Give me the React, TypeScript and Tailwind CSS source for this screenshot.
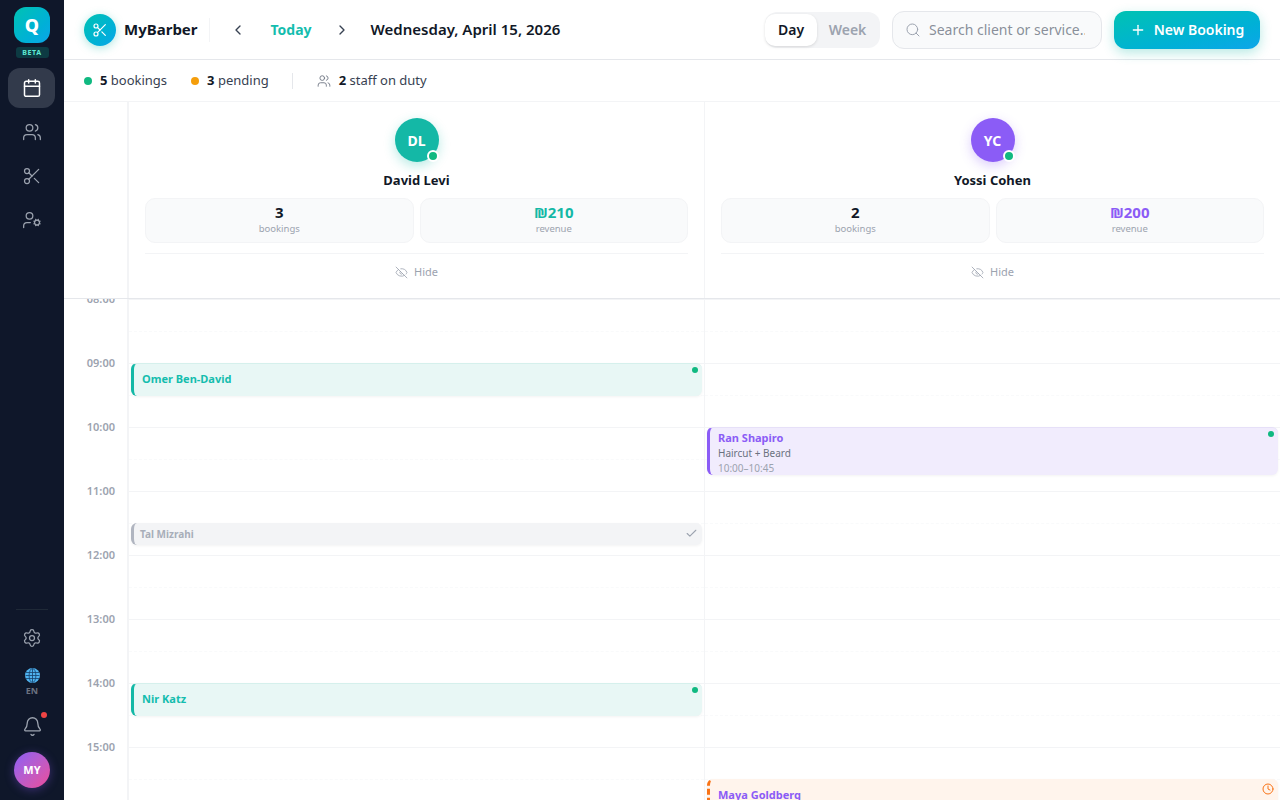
import React from "react";
import {
  Calendar,
  Check,
  ChevronLeft,
  ChevronRight,
  Clock,
  Bell,
  EyeOff,
  Plus,
  Scissors,
  Search,
  Settings,
  UserCog,
  Users,
} from "lucide-react";

const hours = ["08:00", "09:00", "10:00", "11:00", "12:00", "13:00", "14:00", "15:00"];

const staff = [
  {
    initials: "DL",
    name: "David Levi",
    bookings: "3",
    revenue: "₪210",
    avatar: "bg-[#14b8a6] shadow-[0_4px_12px_rgba(20,184,166,0.3)]",
    color: "text-[#14b8a6]",
  },
  {
    initials: "YC",
    name: "Yossi Cohen",
    bookings: "2",
    revenue: "₪200",
    avatar: "bg-[#8b5cf6] shadow-[0_4px_12px_rgba(139,92,246,0.3)]",
    color: "text-[#8b5cf6]",
  },
];

const StaffHeader = ({ person, last }: { person: (typeof staff)[number]; last?: boolean }) => (
  <div className={`flex-1 min-w-0 px-4 pt-4 flex flex-col items-center ${last ? "" : "border-r border-[#f3f4f6]"}`}>
    <div className="relative">
      <div className={`w-11 h-11 rounded-full flex items-center justify-center text-white text-sm font-bold pt-px ${person.avatar}`}>
        {person.initials}
      </div>
      <span className="absolute right-0 bottom-0 w-3 h-3 rounded-full bg-[#10b981] border-2 border-white" />
    </div>
    <div className="mt-[9px] text-[13px] leading-[18px] font-bold text-[#111827]">{person.name}</div>
    <div className="w-full flex gap-[6px] mt-[9px]">
      <div className="flex-1 h-[45px] rounded-[10px] bg-[#f9fafb] border border-[#f3f4f6] flex flex-col items-center pt-[3px]">
        <span className="text-[15px] leading-[20px] font-bold text-[#111827]">{person.bookings}</span>
        <span className="mt-px text-[9.5px] leading-[12px] text-[#9ca3af]">bookings</span>
      </div>
      <div className="flex-1 h-[45px] rounded-[10px] bg-[#f9fafb] border border-[#f3f4f6] flex flex-col items-center pt-[3px]">
        <span className={`text-[15px] leading-[20px] font-bold ${person.color}`}>{person.revenue}</span>
        <span className="mt-px text-[9.5px] leading-[12px] text-[#9ca3af]">revenue</span>
      </div>
    </div>
    <div className="w-full mt-[10px] border-t border-[#f3f4f6] flex items-center justify-center gap-[6px] h-[38px] text-[11px] text-[#9ca3af]">
      <EyeOff size={13} strokeWidth={1.5} />
      <span>Hide</span>
    </div>
  </div>
);

const HourRows = () => (
  <>
    {hours.map((h) => (
      <div key={h} className="h-16 border-t border-[#f3f4f6]">
        <div className="h-8 border-b border-dashed border-[#f9fafb]" />
      </div>
    ))}
    <div className="h-16 border-t border-[#f3f4f6]" />
  </>
);

const Booking = ({
  top,
  height,
  name,
  tone,
  children,
  marker,
}: {
  top: string;
  height: string;
  name: string;
  tone: string;
  children?: React.ReactNode;
  marker?: React.ReactNode;
}) => (
  <div className={`absolute left-[2px] right-[2px] rounded-[6px] border-l-[3px] shadow-[0_1px_3px_rgba(0,0,0,0.05)] ${top} ${height} ${tone}`}>
    <div className="absolute top-[3px] right-[4px]">{marker}</div>
    {children ?? name}
  </div>
);

const Dot = () => <span className="block w-[6px] h-[6px] rounded-full bg-[#10b981]" />;

export default function App() {
  return (
    <div className="flex h-screen overflow-hidden bg-white font-['Noto_Sans',sans-serif] text-[#111827]">
      {/* sidebar */}
      <aside className="w-16 shrink-0 bg-[#0f172a] flex flex-col items-center pt-[7px] pb-3">
        <div className="w-9 h-9 rounded-xl bg-gradient-to-br from-[#00c2b2] to-[#0ea5e9] flex items-center justify-center text-white text-[18px] font-extrabold">
          Q
        </div>
        <div className="mt-[4px] w-[33px] h-[11px] rounded-[3px] bg-[#0d3b43] text-[#5eead4] text-[7px] leading-[11px] font-bold tracking-[0.6px] text-center">
          BETA
        </div>
        <div className="mt-[10px] self-start ml-2 pl-px w-[47px] h-10 rounded-xl bg-[#323a4b] flex items-center justify-center text-white">
          <Calendar size={20} strokeWidth={1.8} />
        </div>
        <div className="mt-1 h-10 flex items-center text-[#9ca3af]">
          <Users size={20} strokeWidth={1.5} />
        </div>
        <div className="mt-1 h-10 flex items-center text-[#9ca3af]">
          <Scissors size={20} strokeWidth={1.5} />
        </div>
        <div className="mt-1 h-10 flex items-center text-[#9ca3af]">
          <UserCog size={20} strokeWidth={1.5} />
        </div>
        <div className="mt-auto w-8 border-t border-[#1f2937]" />
        <div className="mt-[18px] text-[#9ca3af]">
          <Settings size={20} strokeWidth={1.5} />
        </div>
        <svg className="mt-[20px]" width="15" height="15" viewBox="0 0 15 15">
          <circle cx="7.5" cy="7.5" r="7.5" fill="#4fb3f0" />
          <g stroke="#16406b" strokeWidth="0.8" fill="none">
            <ellipse cx="7.5" cy="7.5" rx="3.4" ry="7" />
            <path d="M7.5 0.5v14M1 4.5h13M0.5 7.5h14M1 10.5h13" />
          </g>
        </svg>
        <div className="mt-[2px] text-[9px] leading-[12px] font-bold text-[#6b7280]">EN</div>
        <div className="relative mt-[19px] text-[#9ca3af]">
          <Bell size={21} strokeWidth={1.5} />
          <span className="absolute -top-[4px] -right-[4px] w-[6px] h-[6px] rounded-full bg-[#ef4444]" />
        </div>
        <div className="mt-[15px] w-9 h-9 rounded-full bg-gradient-to-br from-[#8b5cf6] to-[#ec4899] shadow-[0_2px_10px_rgba(139,92,246,0.35)] flex items-center justify-center text-white text-[11px] font-bold">
          MY
        </div>
      </aside>

      <main className="flex-1 min-w-0 flex flex-col">
        {/* top bar */}
        <header className="h-[60px] shrink-0 border-b border-[#e5e7eb] flex items-center pl-5 pr-5">
          <div className="w-8 h-8 rounded-full bg-gradient-to-br from-[#00c2b2] to-[#0ea5e9] shadow-[0_2px_10px_rgba(20,184,166,0.35)] flex items-center justify-center text-white">
            <Scissors size={16} strokeWidth={1.8} />
          </div>
          <span className="ml-2 text-[15px] font-bold text-[#111827]">MyBarber</span>
          <div className="ml-[11px] h-6 border-l border-[#f3f4f6]" />
          <ChevronLeft className="ml-[20px] text-[#374151]" size={16} strokeWidth={2} />
          <span className="ml-[25px] text-sm font-bold text-[#14bdae]">Today</span>
          <ChevronRight className="ml-[22px] text-[#374151]" size={16} strokeWidth={2} />
          <span className="ml-[21px] text-[15px] font-semibold text-[#111827]">Wednesday, April 15, 2026</span>

          <div className="ml-auto w-[115px] h-9 rounded-xl bg-[#f3f4f6] flex items-center py-[2px] pr-[2px] text-sm font-semibold">
            <div className="w-[52px] h-8 rounded-[10px] bg-white shadow-[0_1px_3px_rgba(0,0,0,0.12)] flex items-center justify-center text-[#111827]">
              Day
            </div>
            <div className="flex-1 text-center text-[#9ca3af]">Week</div>
          </div>
          <div className="ml-3 w-[210px] h-[38px] rounded-xl bg-[#f9fafb] border border-[#e5e7eb] flex items-center pl-3 pr-4 text-[#9ca3af]">
            <Search size={16} strokeWidth={1.5} className="shrink-0" />
            <input
              placeholder="Search client or service..."
              className="ml-2 flex-1 min-w-0 bg-transparent outline-none text-sm placeholder:text-[#6b7280]/80"
            />
          </div>
          <button className="ml-3 w-[146px] h-[38px] rounded-xl bg-gradient-to-br from-[#00c2b2] to-[#0ea5e9] shadow-[0_4px_12px_rgba(20,184,166,0.3)] flex items-center justify-center gap-2 text-white text-sm font-semibold">
            <Plus size={16} strokeWidth={2} />
            New Booking
          </button>
        </header>

        {/* summary strip */}
        <div className="h-[42px] shrink-0 border-b border-[#f3f4f6] flex items-center pl-5 text-[13px] text-[#374151]">
          <span className="w-2 h-2 rounded-full bg-[#10b981]" />
          <span className="ml-2">
            <b className="font-bold text-[#111827]">5</b> bookings
          </span>
          <span className="ml-6 w-2 h-2 rounded-full bg-[#f59e0b]" />
          <span className="ml-2">
            <b className="font-bold text-[#111827]">3</b> pending
          </span>
          <div className="ml-[23px] h-4 border-l border-[#e5e7eb]" />
          <Users className="ml-[24px] text-[#6b7280]" size={14} strokeWidth={1.5} />
          <span className="ml-2">
            <b className="font-bold text-[#111827]">2</b> staff on duty
          </span>
        </div>

        {/* staff headers */}
        <div className="h-[197px] shrink-0 flex border-b border-[#e5e7eb]">
          <div className="w-[65px] shrink-0 border-r-2 border-[#f3f4f6]" />
          {staff.map((p, i) => (
            <StaffHeader key={p.name} person={p} last={i === staff.length - 1} />
          ))}
        </div>

        {/* schedule */}
        <div className="flex-1 min-h-0 overflow-hidden flex">
          <div className="relative w-[65px] shrink-0 border-r-2 border-[#f3f4f6]">
            {hours.map((h) => (
              <div key={h} className="h-16 relative">
                <span className="absolute right-[12px] -top-[8px] text-[11px] leading-[16px] font-semibold text-[#9ca3af]">{h}</span>
              </div>
            ))}
          </div>
          <div className="relative flex-1 min-w-0 border-r border-[#f3f4f6]">
            <HourRows />
            <Booking
              top="top-[64px]"
              height="h-[33px]"
              name="Omer Ben-David"
              tone="bg-[#e8f7f5] border-[#14b8a6] border-t border-t-[#d5f0ec] pl-2 pt-[7px] text-[11px] leading-[16px] font-bold text-[#14bdae]"
              marker={<Dot />}
            />
            <Booking
              top="top-[224px]"
              height="h-[22px]"
              name="Tal Mizrahi"
              tone="bg-[#f3f4f6] border-[#b0b5c0] pl-[6px] pt-[3px] text-[10px] leading-[16px] font-bold text-[#a8aeb9]"
              marker={<Check size={13} strokeWidth={2} className="mt-[1px] text-[#9ca3af]" />}
            />
            <Booking
              top="top-[384px]"
              height="h-[33px]"
              name="Nir Katz"
              tone="bg-[#e8f7f5] border-[#14b8a6] border-t border-t-[#d5f0ec] pl-2 pt-[7px] text-[11px] leading-[16px] font-bold text-[#14bdae]"
              marker={<Dot />}
            />
          </div>
          <div className="relative flex-1 min-w-0">
            <HourRows />
            <Booking
              top="top-[128px]"
              height="h-[48px]"
              name="Ran Shapiro"
              tone="bg-[#f1ecfd] border-[#8b5cf6] border-t border-t-[#e6e0f8] pl-2 pt-[2px]"
              marker={<Dot />}
            >
              <div className="text-[11px] leading-[16px] font-bold text-[#8b5cf6]">Ran Shapiro</div>
              <div className="text-[10px] leading-[15px] text-[#6b7280]">Haircut + Beard</div>
              <div className="text-[10px] leading-[15px] text-[#9ca3af]">10:00–10:45</div>
            </Booking>
            <Booking
              top="top-[480px]"
              height="h-[48px]"
              name="Maya Goldberg"
              tone="bg-[#fff4ec] border-dashed border-[#f97316] border-t border-t-transparent pl-2 pt-[7px] text-[11px] leading-[16px] font-bold text-[#8b5cf6]"
              marker={<Clock size={12} strokeWidth={2} className="text-[#f97316]" />}
            />
          </div>
        </div>
      </main>
    </div>
  );
}
